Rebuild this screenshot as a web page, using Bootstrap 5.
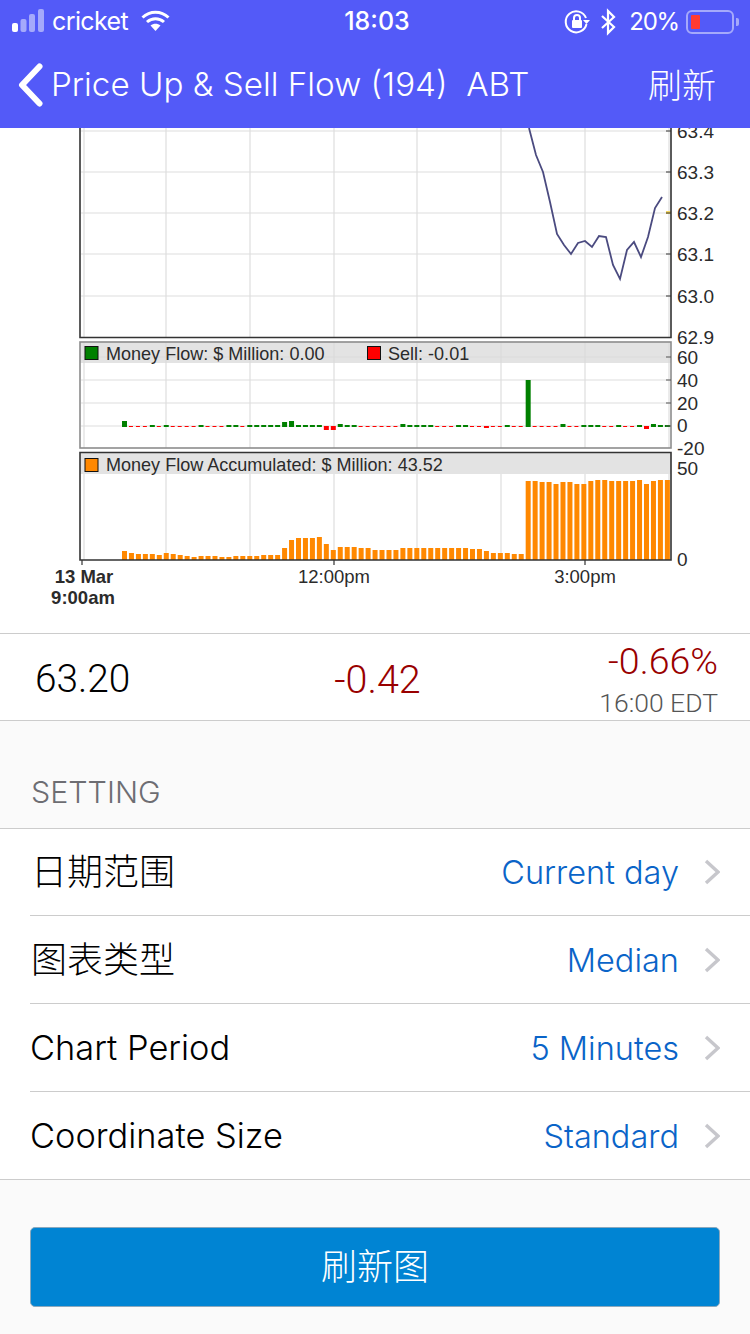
<!DOCTYPE html>
<html lang="zh">
<head>
<meta charset="utf-8">
<title>Price Up &amp; Sell Flow</title>
<link href="https://cdn.jsdelivr.net/npm/bootstrap@5.3.0/dist/css/bootstrap.min.css" rel="stylesheet">
<style>
html,body{width:750px;height:1334px;overflow:hidden;background:#fafafa;}
body{font-family:Inter,"Noto Sans CJK SC",sans-serif;font-weight:300;color:#000;}
.topbar{background:#535af8;color:#fff;height:128px;}
.statusrow{height:40px;padding:0 11px 0 12px;font-size:25px;font-weight:400;}
.statusleft{width:303px;}
.statusright{width:300px;}
.carrier{letter-spacing:-.6px;}
.wifiicon{margin-left:13px;}
.clock{font-weight:500;font-size:25px;}
.btgap{margin-left:9px;}
.pct{margin-left:12px;font-size:24px;letter-spacing:-1.200px;}
.batt{width:48px;height:24px;border:2px solid #a5a9fb;border-radius:6px;padding:3px;margin-left:7px;}
.battfill{width:9px;height:100%;background:#ff3b30;border-radius:1px;}
.battnub{width:3px;height:8px;background:#a5a9fb;border-radius:0 2px 2px 0;margin-left:2px;}
.navrow{height:88px;padding:2px 34px 0 18px;}
.navtitle{font-size:33.200px;margin-left:8px;white-space:pre;}
.navaction{font-size:34px;}
.chartarea{height:505px;background:#fff;}
.chartarea svg{display:block;}
.chartarea text{font-family:"Liberation Sans",sans-serif;fill:#2b2b2b;font-weight:400;}
.axislbl{font-size:19px;}
.legendlbl{font-size:18.050px;}
.timelbl{font-size:18.500px;}
.timebold{font-weight:700 !important;}
.quote{height:88px;background:#fff;border-top:1px solid #ccc;border-bottom:1px solid #ccc;padding:0 32px 0 35px;}
.quoteval{font-family:Roboto,sans-serif;font-weight:300;font-size:38.800px;line-height:1;padding-top:5px;}
.quotemid{font-size:39.500px;padding-left:2px;}
.quotetop{font-size:37.500px;padding-top:5px;}
.neg{color:#990000;}
.quotesub{font-family:Roboto,sans-serif;font-weight:300;font-size:26.500px;color:#555;line-height:1;margin-top:9px;}
.sechead{height:107px;padding:0 0 12px 31px;font-size:30.400px;color:#6d6d72;}
.setlist{border-top:1px solid #ccc;border-bottom:1px solid #ccc;background:#fff;padding-left:30px;}
.setrow{height:88px;padding:0 30px 0 0;border-bottom:1px solid #ccc;background:#fff;}
.setrow:first-child{height:87px;}
.setrow:last-child{border-bottom:0;height:87px;}
.setname{font-size:34.400px;}
.setcjk{font-size:36px;padding-left:1px;}
.setval{font-size:32.500px;color:#0a64c8;padding-top:3px;}
.chev{margin-left:25px;display:block;}
.actionwrap{padding:47px 30px 0;}
.refreshbtn{display:block;width:100%;height:80px;background:#0084d3;border:1px solid #8aa8bd;border-radius:5px;color:#fff;font-size:36px;font-weight:300;line-height:1;}
.refreshbtn:hover{background:#0084d3;color:#fff;}
</style>
</head>
<body>
<header class="topbar">
  <div class="statusrow d-flex align-items-end justify-content-between">
    <div class="statusleft d-flex align-items-center">
      <svg width="36" height="24" viewBox="0 0 36 24" aria-hidden="true"><rect x="0" y="14" width="6" height="9" rx="2" fill="#fff"/><rect x="8.500" y="10" width="6" height="13" rx="2" fill="#a5a9fb"/><rect x="17" y="5" width="6" height="18" rx="2" fill="#a5a9fb"/><rect x="26" y="0" width="6" height="23" rx="2" fill="#a5a9fb"/></svg>
      <span class="ms-1 carrier">cricket</span>
      <svg class="wifiicon" width="29" height="22" viewBox="0 0 29 22" aria-hidden="true"><g fill="none" stroke="#fff" stroke-width="3"><path d="M1.500 7.500C9 .5 20 .5 27.500 7.500"/><path d="M6 12C11 7.500 18 7.500 23 12"/></g><path d="M9.500 15.500C12.500 13 16.500 13 19.500 15.500L14.500 21Z" fill="#fff"/></svg>
    </div>
    <div class="clock">18:03</div>
    <div class="statusright d-flex align-items-center justify-content-end">
      <svg width="26" height="26" viewBox="0 0 26 26" aria-hidden="true"><path d="M22 9A10.500 10.500 0 1 0 22.500 15" fill="none" stroke="#fff" stroke-width="2"/><path d="M19 11h7l-3.500 4z" fill="#fff"/><rect x="8" y="11" width="10" height="8" rx="1" fill="#fff"/><path d="M10 11V9a3 3 0 0 1 6 0v2" fill="none" stroke="#fff" stroke-width="2"/></svg>
      <svg class="btgap" width="18" height="28" viewBox="0 0 18 28" aria-hidden="true"><path d="M3 8l12 11-6 6V3l6 6L3 20" fill="none" stroke="#fff" stroke-width="2.200"/></svg>
      <span class="pct">20%</span>
      <div class="batt"><div class="battfill"></div></div>
      <div class="battnub"></div>
    </div>
  </div>
  <nav class="navrow d-flex align-items-center justify-content-between">
    <div class="d-flex align-items-center">
      <svg width="25" height="44" viewBox="0 0 25 44" aria-hidden="true"><path d="M21.500 3.500L4 22l17.500 18.500" fill="none" stroke="#fff" stroke-width="6" stroke-linecap="round" stroke-linejoin="round"/></svg>
      <span class="navtitle">Price Up &amp; Sell Flow (194)  ABT</span>
    </div>
    <span class="navaction">刷新</span>
  </nav>
</header>

<section class="chartarea">
  <svg id="chart" width="750" height="505" viewBox="0 128 750 505" role="img" aria-label="Price and money flow chart">
    <defs>
      <clipPath id="pricearea"><rect x="80" y="128" width="591" height="209"/></clipPath>
    </defs>
    <g id="grid"></g>
    <polyline clip-path="url(#pricearea)" fill="none" stroke="#4b4b80" stroke-width="1.800" points="529,128 536,155 543,172 550,202 557,234 564,245 571,254 578,243 585,241 592,247 599,236 606,237 613,265 620,279 627,250 634,242 641,257 648,237 655,208 662,197"/>
    <rect x="666" y="211" width="5" height="3" fill="#f6d860"/>
    <path d="M80 128V337.500H671V128" fill="none" stroke="#333" stroke-width="1.600"/>
    <path d="M666 131h5M666 172h5M666 213h5M666 254h5M666 296h5" stroke="#333" stroke-width="1.200"/>
    <text class="axislbl" x="677" y="138">63.4</text>
    <text class="axislbl" x="677" y="179">63.3</text>
    <text class="axislbl" x="677" y="220">63.2</text>
    <text class="axislbl" x="677" y="261">63.1</text>
    <text class="axislbl" x="677" y="303">63.0</text>
    <text class="axislbl" x="677" y="344">62.9</text>

    <rect x="80" y="342" width="591" height="21" fill="#d9d9d9" fill-opacity=".75"/>
    <g id="flowbars"></g>
    <rect x="80" y="342" width="591" height="106" fill="none" stroke="#8c8c8c" stroke-width="1.600"/>
    <path d="M666 357h5M666 380h5M666 403h5M666 426h5" stroke="#555" stroke-width="1.200"/>
    <rect x="85" y="346.500" width="13" height="13" fill="#008000" stroke="#111"/>
    <text class="legendlbl" x="106" y="360">Money Flow: $ Million: 0.00</text>
    <rect x="367.500" y="346.500" width="13" height="13" fill="#ff0000" stroke="#111"/>
    <text class="legendlbl" x="388" y="360">Sell: -0.01</text>
    <text class="axislbl" x="677" y="364">60</text>
    <text class="axislbl" x="677" y="387">40</text>
    <text class="axislbl" x="677" y="410">20</text>
    <text class="axislbl" x="677" y="432">0</text>
    <text class="axislbl" x="677" y="455">-20</text>

    <rect x="80" y="452" width="591" height="22" fill="#d9d9d9" fill-opacity=".75"/>
    <g id="accbars"></g>
    <path d="M80 452.500H671V560H80Z" fill="none" stroke="#333" stroke-width="1.600"/>
    <path d="M82 560v5M334 560v5M585 560v5" stroke="#333" stroke-width="1.200"/>
    <rect x="85" y="458.500" width="13" height="13" fill="#ff8800" stroke="#111"/>
    <text class="legendlbl" x="106" y="471">Money Flow Accumulated: $ Million: 43.52</text>
    <text class="axislbl" x="677" y="475">50</text>
    <text class="axislbl" x="677" y="566">0</text>
    <text class="timelbl timebold" x="84" y="583" text-anchor="middle">13 Mar</text>
    <text class="timelbl timebold" x="83" y="604" text-anchor="middle">9:00am</text>
    <text class="timelbl" x="334" y="583" text-anchor="middle">12:00pm</text>
    <text class="timelbl" x="585" y="583" text-anchor="middle">3:00pm</text>
  </svg>
</section>

<section class="quote row g-0 align-items-center">
  <div class="col-4 quoteval">63.20</div>
  <div class="col-4 quoteval quotemid neg text-center">-0.42</div>
  <div class="col-4 text-end">
    <div class="quoteval quotetop neg">-0.66%</div>
    <div class="quotesub">16:00 EDT</div>
  </div>
</section>

<div class="sechead d-flex align-items-end">SETTING</div>

<section class="setlist">
  <div class="setrow d-flex align-items-center justify-content-between"><span class="setcjk">日期范围</span><span class="d-flex align-items-center"><span class="setval">Current day</span><svg class="chev" width="16" height="26" viewBox="0 0 16 26" aria-hidden="true"><path d="M2 2l12 11L2 24" fill="none" stroke="#c7c7cc" stroke-width="3.400"/></svg></span></div>
  <div class="setrow d-flex align-items-center justify-content-between"><span class="setcjk">图表类型</span><span class="d-flex align-items-center"><span class="setval">Median</span><svg class="chev" width="16" height="26" viewBox="0 0 16 26" aria-hidden="true"><path d="M2 2l12 11L2 24" fill="none" stroke="#c7c7cc" stroke-width="3.400"/></svg></span></div>
  <div class="setrow d-flex align-items-center justify-content-between"><span class="setname">Chart Period</span><span class="d-flex align-items-center"><span class="setval">5 Minutes</span><svg class="chev" width="16" height="26" viewBox="0 0 16 26" aria-hidden="true"><path d="M2 2l12 11L2 24" fill="none" stroke="#c7c7cc" stroke-width="3.400"/></svg></span></div>
  <div class="setrow d-flex align-items-center justify-content-between"><span class="setname">Coordinate Size</span><span class="d-flex align-items-center"><span class="setval">Standard</span><svg class="chev" width="16" height="26" viewBox="0 0 16 26" aria-hidden="true"><path d="M2 2l12 11L2 24" fill="none" stroke="#c7c7cc" stroke-width="3.400"/></svg></span></div>
</section>

<div class="actionwrap"><button type="button" class="btn refreshbtn">刷新图</button></div>

<script src="https://cdn.jsdelivr.net/npm/bootstrap@5.3.0/dist/js/bootstrap.bundle.min.js"></script>
<script>
(function(){
  var NS='http://www.w3.org/2000/svg';
  function el(parent,tag,attrs){var e=document.createElementNS(NS,tag);for(var k in attrs){e.setAttribute(k,attrs[k]);}parent.appendChild(e);return e;}
  var grid=document.getElementById('grid');
  [[131,172,213,254,296],[357,380,403,426],[]].forEach(function(ys){
    ys.forEach(function(y){el(grid,'line',{x1:81,x2:671,y1:y,y2:y,stroke:'#dedede','stroke-width':1.200});});
  });
  [[128,337],[342,448],[474,560]].forEach(function(r){
    [84,166,250,334,417,501,585,669].forEach(function(x){el(grid,'line',{x1:x,x2:x,y1:r[0],y2:r[1],stroke:'#dedede','stroke-width':1.200});});
  });
  // Accumulated: bar tops in page pixels, one per 5-minute period
  var tops=[551,553,554,554,554,555,553,554,555,556,557,556,556,556,557,557,556,556,556,556,555,555,555,548,540,538,538,538,537,544,550,547,547,547,548,548,550,550,550,550,548,548,548,548,548,548,548,548,548,548,549,549,551,553,553,553,554,554,481,481,482,482,484,482,482,484,484,481,480,480,481,481,481,481,480,484,481,480,480];
  var acc=document.getElementById('accbars');
  tops.forEach(function(t,i){el(acc,'rect',{x:122+i*6.96,y:t,width:5,height:560-t,fill:'#ff8800'});});
  // Flow: sign and height for each period
  var green={0:6,4:2,6:2,11:2,15:2,16:2,18:2,19:2,20:2,21:2,22:2,23:5,24:6,25:2,26:2,27:2,28:2,31:3,32:2,33:2,40:3,41:2,42:2,43:2,44:2,48:2,49:2,55:2,58:47,63:3,66:2,67:2,68:2,71:2,74:2,76:3,77:2,78:2};
  var redTall={29:4,30:4,52:2,75:3};
  var flow=document.getElementById('flowbars');
  for(var i=0;i<79;i++){
    var x=122+i*6.96;
    if(green[i]){el(flow,'rect',{x:x,y:427-green[i],width:5,height:green[i],fill:'#008000'});}
    else if(redTall[i]){el(flow,'rect',{x:x,y:426,width:5,height:redTall[i],fill:'#ff0000'});}
    else{el(flow,'rect',{x:x,y:426,width:4,height:1,fill:'#ff0000'});}
  }
})();
</script>
</body>
</html>
